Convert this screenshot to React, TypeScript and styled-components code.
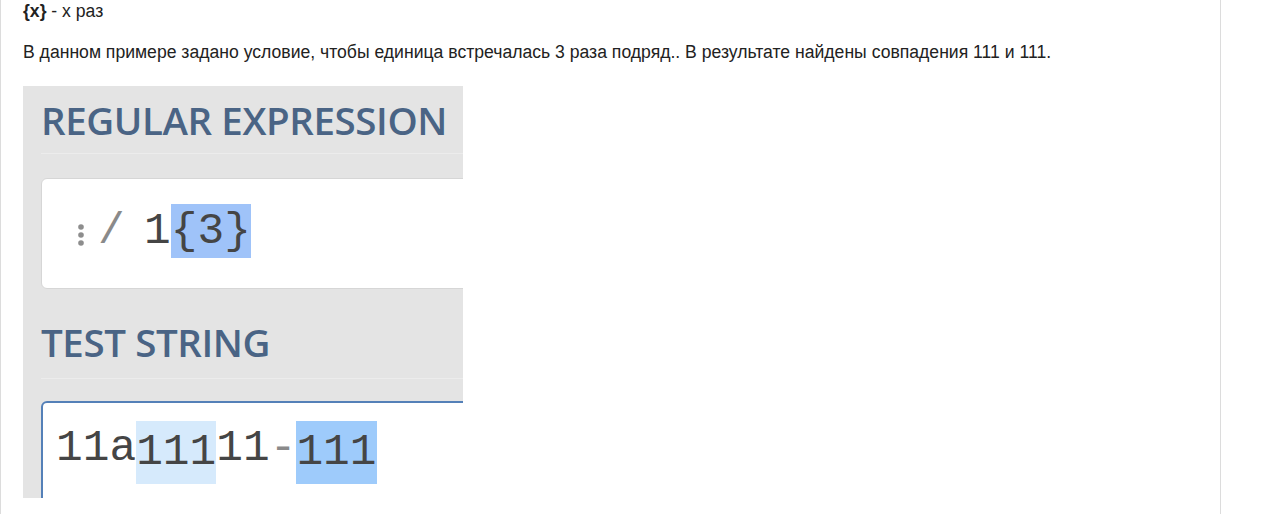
import React from 'react'
import styled, { createGlobalStyle } from 'styled-components'

const Global = createGlobalStyle`
  html, body {
    margin: 0;
    padding: 0;
    background: #fff;
  }
  body {
    font-family: "Liberation Sans", Arial, sans-serif;
  }
`

const Page = styled.div`
  width: 1221px;
  height: 514px;
  box-sizing: border-box;
  border-left: 1px solid #dcdcdc;
  border-right: 1px solid #dcdcdc;
  padding: 0 22px;
  overflow: hidden;
  color: #222;
  font-size: 17.6px;
`

const Para = styled.p<{ $gap?: number }>`
  margin: ${p => p.$gap || 0}px 0 0;
  line-height: 22px;
`

const Shot = styled.div`
  margin-top: 23px;
  width: 440px;
  height: 412px;
  background: #e4e4e4;
  overflow: hidden;
  padding-left: 18px;
  box-sizing: border-box;
  display: flex;
  flex-direction: column;
`

const Heading = styled.div<{ $top: number }>`
  margin-top: ${p => p.$top}px;
  font-family: "Open Sans", sans-serif;
  font-weight: 600;
  font-size: 38.5px;
  line-height: 44px;
  color: #4a6485;
  white-space: nowrap;
  letter-spacing: -0.4px;
`

const Rule = styled.div<{ $top: number }>`
  margin-top: ${p => p.$top}px;
  height: 1px;
  background: #cfcfcf;
  border-bottom: 1px solid #ececec;
  margin-right: -20px;
`

const Field = styled.div<{ $focus?: boolean }>`
  margin-top: ${p => (p.$focus ? 22 : 24)}px;
  margin-right: -20px;
  height: ${p => (p.$focus ? 140 : 111)}px;
  box-sizing: border-box;
  background: #fff;
  border: ${p => (p.$focus ? '2px solid #5480b8' : '1px solid #d6d6d6')};
  border-radius: 6px;
  display: flex;
  align-items: flex-start;
  padding-top: ${p => (p.$focus ? 18 : 25)}px;
  padding-left: ${p => (p.$focus ? 13 : 36)}px;
  flex-shrink: 0;
`

const Code = styled.div`
  font-family: "Liberation Mono", monospace;
  font-size: 44.5px;
  line-height: 54px;
  color: #454545;
  white-space: pre;
  display: flex;
`

const Mark = styled.span<{ $tone: 'strong' | 'soft' | 'regex'; $h?: number }>`
  background: ${p =>
    p.$tone === 'soft' ? '#d6eafc' : p.$tone === 'strong' ? '#9ecbfb' : '#9fc3f9'};
  display: inline-block;
  height: ${p => p.$h || 54}px;
  line-height: ${p => p.$h || 54}px;
`

const Dim = styled.span`
  color: #8a8a8a;
`

const Slash = styled.span`
  display: inline-block;
  width: 46px;
  color: #8a8a8a;
`

const Dots = styled.svg`
  margin-top: 19px;
  margin-right: 14px;
  flex-shrink: 0;
`

export default function App() {
  return (
    <>
      <Global />
      <Page>
        <Para>
          <b>{'{x}'}</b> - x раз
        </Para>
        <Para $gap={19}>
          В данном примере задано условие, чтобы единица встречалась 3 раза подряд.. В результате найдены совпадения 111 и 111.
        </Para>
        <Shot>
          <Heading $top={12}>REGULAR EXPRESSION</Heading>
          <Rule $top={11} />
          <Field>
            <Dots width="6" height="26" viewBox="0 0 6 26">
              <circle cx="3" cy="4" r="2.8" fill="#8d8d8d" />
              <circle cx="3" cy="12" r="2.8" fill="#8d8d8d" />
              <circle cx="3" cy="20" r="2.8" fill="#8d8d8d" />
            </Dots>
            <Code>
              <Slash>/</Slash>1<Mark $tone="regex">{'{3}'}</Mark>
            </Code>
          </Field>
          <Heading $top={31}>TEST STRING</Heading>
          <Rule $top={14} />
          <Field $focus>
            <Code>
              11a<Mark $tone="soft" $h={63}>111</Mark>11<Dim>-</Dim>
              <Mark $tone="strong" $h={63}>111</Mark>
            </Code>
          </Field>
        </Shot>
      </Page>
    </>
  )
}
